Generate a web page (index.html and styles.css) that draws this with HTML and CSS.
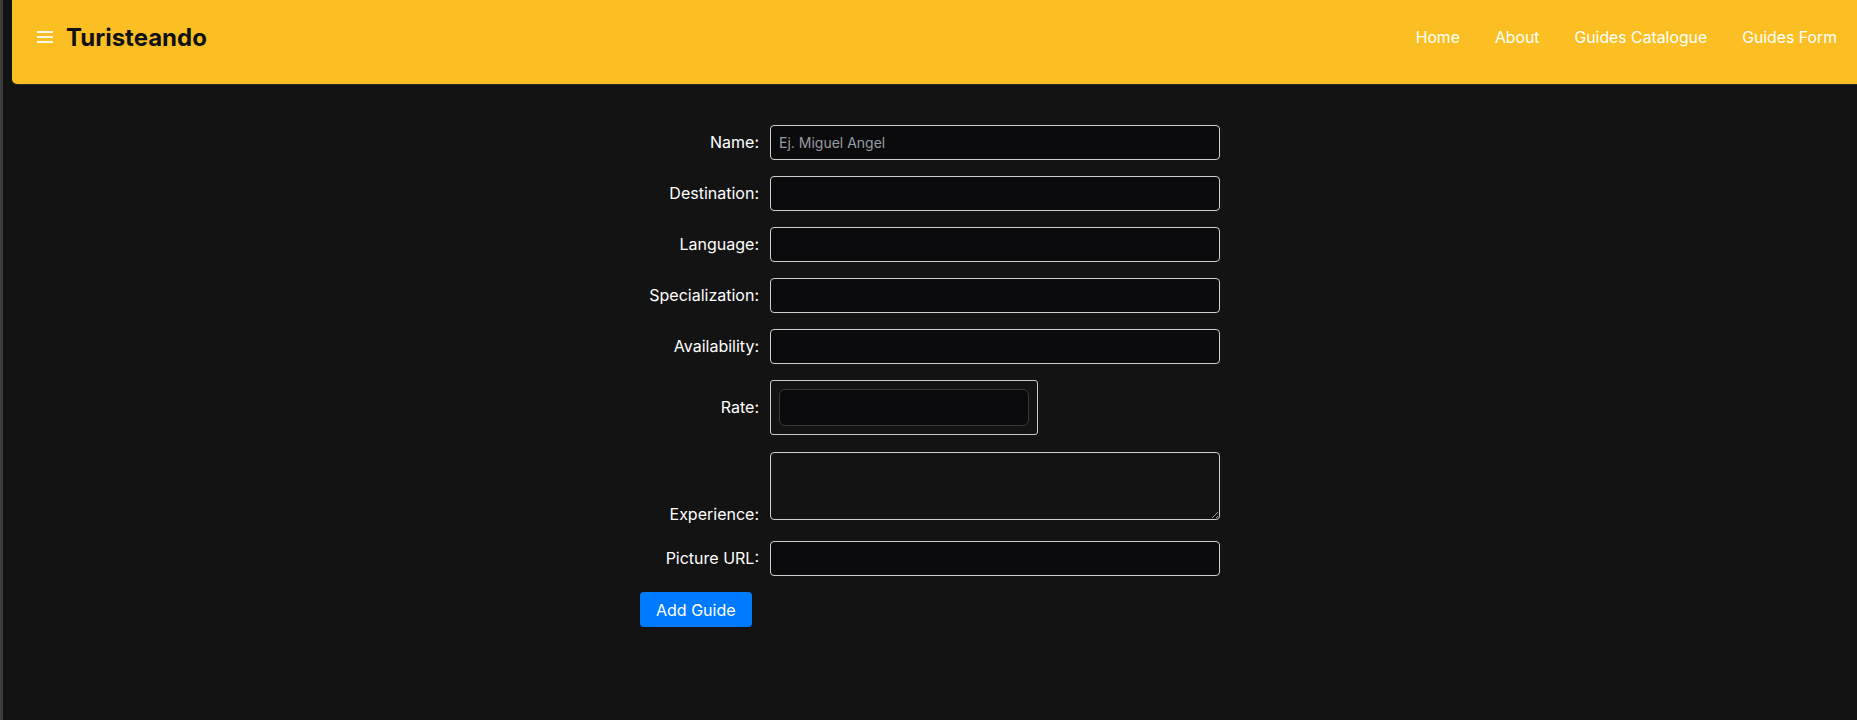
FILE: index.html
```html
<!DOCTYPE html>
<html lang="en">
<head>
<meta charset="utf-8">
<title>Turisteando</title>
<link rel="stylesheet" href="styles.css">
</head>
<body>
<div class="frame">
  <div class="strip"></div>
  <main class="app">
    <header class="topbar">
      <div class="brand">
        <svg class="burger" width="16" height="12" viewBox="0 0 16 12" aria-hidden="true">
          <rect x="0" y="0" width="16" height="2" fill="#fff8e6"/>
          <rect x="0" y="5" width="16" height="2" fill="#fff8e6"/>
          <rect x="0" y="10" width="16" height="2" fill="#fff8e6"/>
        </svg>
        <span class="logo">Turisteando</span>
      </div>
      <nav class="nav">
        <a href="#">Home</a>
        <a href="#">About</a>
        <a href="#">Guides Catalogue</a>
        <a href="#">Guides Form</a>
      </nav>
    </header>

    <form class="guide-form">
      <div class="row"><label class="lbl">Name:</label><input class="field" type="text" placeholder="Ej. Miguel Angel"></div>
      <div class="row"><label class="lbl">Destination:</label><input class="field" type="text"></div>
      <div class="row"><label class="lbl">Language:</label><input class="field" type="text"></div>
      <div class="row"><label class="lbl">Specialization:</label><input class="field" type="text"></div>
      <div class="row"><label class="lbl">Availability:</label><input class="field" type="text"></div>
      <div class="row row-rate"><label class="lbl">Rate:</label><span class="rate-box"><input class="rate-input" type="text"></span></div>
      <div class="row row-area"><label class="lbl">Experience:</label><textarea class="area"></textarea></div>
      <div class="row"><label class="lbl">Picture URL:</label><input class="field" type="text"></div>
      <button class="submit" type="button">Add Guide</button>
    </form>
  </main>
</div>
</body>
</html>
```

FILE: styles.css
```css
* { box-sizing: border-box; }

html, body {
  margin: 0;
  height: 100%;
  overflow: hidden;
  background: #131313;
  font-family: Inter, "Liberation Sans", sans-serif;
  color: #ffffff;
}

.frame {
  display: flex;
  height: 100%;
}

.strip {
  width: 3px;
  flex: 0 0 3px;
  background: #3c3c3c;
}

.app {
  flex: 1;
  min-width: 0;
  background: #131313;
}

.topbar {
  margin-left: 9px;
  height: 84px;
  background: #fbbf24;
  border-bottom-left-radius: 5px;
  box-shadow: 0 1px 0 #2a2a2a;
  display: flex;
  align-items: center;
  justify-content: space-between;
  padding: 0 20px 10px 25px;
}

.brand {
  display: flex;
  align-items: center;
  gap: 13px;
}

.burger { display: block; }

.logo {
  font-size: 24px;
  font-weight: 700;
  color: #111111;
}

.nav {
  display: flex;
  gap: 35px;
}

.nav a {
  color: #ffffff;
  text-decoration: none;
  font-size: 15.8px;
  font-weight: 400;
}

.guide-form {
  width: 580px;
  margin: 41px auto 0;
}

.row {
  margin-bottom: 16px;
  font-size: 16px;
  line-height: normal;
}

.row-rate { margin-bottom: 17px; }
.row-area { margin-bottom: 17px; }

.lbl {
  display: inline-block;
  width: 119px;
  margin-right: 11px;
  text-align: right;
  color: #ffffff;
  font-size: 16px;
  font-weight: 400;
}

.field {
  display: inline-block;
  width: 450px;
  height: 35px;
  padding: 0 8px;
  background: #0b0b0d;
  border: 1px solid #cfcfcf;
  border-radius: 4px;
  color: #e5e5e5;
  font-family: Inter, "Liberation Sans", sans-serif;
  font-size: 14px;
  vertical-align: baseline;
  outline: none;
}

.field::placeholder { color: #979ba3; }

.rate-box {
  display: inline-flex;
  padding: 8px;
  border: 1px solid #c8c8c8;
  border-radius: 3px;
  background: #131313;
  vertical-align: baseline;
}

.rate-input {
  width: 250px;
  height: 37px;
  padding: 0 8px;
  background: #0b0b0d;
  border: 1px solid #3a3a3c;
  border-radius: 6px;
  color: #e5e5e5;
  font-family: Inter, "Liberation Sans", sans-serif;
  font-size: 14px;
  outline: none;
}

.area {
  display: inline-block;
  width: 450px;
  height: 68px;
  margin: 0;
  padding: 6px 8px;
  background: #131313;
  border: 1px solid #cfcfcf;
  border-radius: 4px;
  color: #e5e5e5;
  font-family: Inter, "Liberation Sans", sans-serif;
  font-size: 14px;
  vertical-align: baseline;
  outline: none;
}

.submit {
  display: block;
  height: 35px;
  padding: 0 16px;
  background: #007bff;
  border: none;
  border-radius: 4px;
  color: #ffffff;
  font-family: Inter, "Liberation Sans", sans-serif;
  font-size: 16px;
  cursor: pointer;
}
```
